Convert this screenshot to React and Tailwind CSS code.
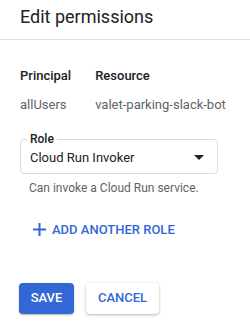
export default function App() {
  return (
    <div className="w-[250px] h-[331px] bg-white overflow-hidden" style={{ fontFamily: 'Roboto, "Liberation Sans", sans-serif' }}>
      <div className="h-[40px] px-5 pb-[6px] flex items-center border-b border-[#e0e0e0]">
        <h1 className="text-[18px] text-[#202124] leading-none">Edit permissions</h1>
      </div>

      <div className="px-5 pt-[26px] flex gap-[24px] text-[13px]">
        <div className="flex flex-col gap-[9px]">
          <span className="font-medium text-[#202124]">Principal</span>
          <span className="text-[#5f6368]">allUsers</span>
        </div>
        <div className="flex flex-col gap-[9px]">
          <span className="font-medium text-[#202124]">Resource</span>
          <span className="text-[#5f6368]">valet-parking-slack-bot</span>
        </div>
      </div>

      <div className="px-5 pt-[25px]">
        <div className="relative w-[198px] h-[35px] border border-[#dadce0] rounded flex items-center pl-[9px] pr-[13px]">
          <span className="absolute -top-[9px] left-[6px] px-[3px] bg-white text-[12px] font-medium text-[#202124] leading-[16px]">Role</span>
          <span className="text-[13px] text-[#202124] pt-[3px] flex-1">Cloud Run Invoker</span>
          <svg width="10" height="5" viewBox="0 0 10 5" className="mt-[2px]">
            <path d="M0 0h10L5 5z" fill="#202124" />
          </svg>
        </div>
        <p className="pl-[9px] pt-[5px] text-[12px] text-[#5f6368]">Can invoke a Cloud Run service.</p>
      </div>

      <div className="pl-[33px] pt-[23px] flex items-center gap-[6px] text-[#3367d6]">
        <svg width="13" height="13" viewBox="0 0 13 13">
          <path d="M5.5 0h2v5.5H13v2H7.5V13h-2V7.5H0v-2h5.5z" fill="currentColor" />
        </svg>
        <span className="text-[13px] font-medium">ADD ANOTHER ROLE</span>
      </div>

      <div className="px-[19px] pt-[43px] flex gap-3">
        <button className="w-[55px] h-[31px] rounded bg-[#3367d6] text-white text-[13px] font-medium shadow-[0_1px_2px_rgba(0,0,0,0.3)]">SAVE</button>
        <button className="w-[73px] h-[31px] rounded bg-white text-[#3367d6] text-[13px] font-medium shadow-[0_1px_3px_rgba(0,0,0,0.3)]">CANCEL</button>
      </div>
    </div>
  );
}
